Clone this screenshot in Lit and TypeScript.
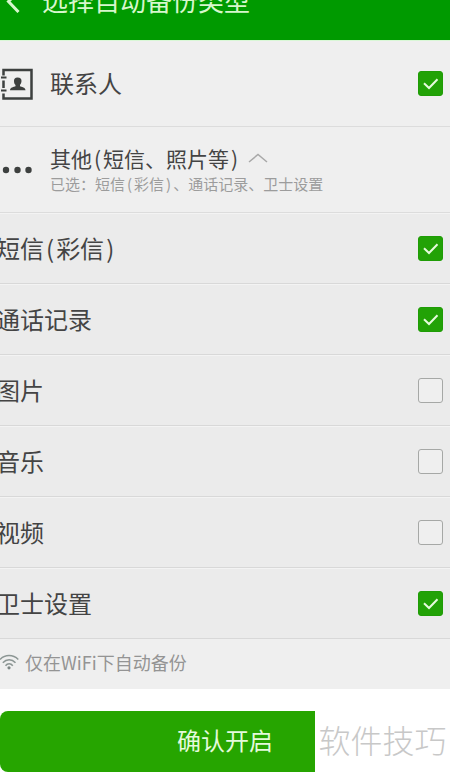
import { LitElement, html, css, svg } from "lit";
import { customElement, state } from "lit/decorators.js";

interface Item {
  id: string;
  label: string;
  checked: boolean;
}

@customElement("check-box")
class CheckBox extends LitElement {
  static properties = {
    checked: { type: Boolean },
    label: { type: String },
  };
  declare checked: boolean;
  declare label: string;

  static styles = css`
    :host {
      display: block;
      flex: none;
    }
    .box {
      display: grid;
      width: 25px;
      height: 25px;
    }
    .input {
      grid-area: 1 / 1;
      appearance: none;
      margin: 0;
      box-sizing: border-box;
      width: 25px;
      height: 25px;
      border: 1px solid #a6a8a6;
      border-radius: 3px;
      background: #efefef;
    }
    .input:checked {
      border-color: #1f9c06;
      background: #22a206;
    }
    .tick {
      grid-area: 1 / 1;
      width: 25px;
      height: 25px;
      pointer-events: none;
      fill: none;
      stroke: #e6fbdc;
      stroke-width: 2;
    }
  `;

  private toggle(e: Event) {
    this.checked = (e.target as HTMLInputElement).checked;
    this.dispatchEvent(new CustomEvent("toggled", { detail: this.checked }));
  }

  render() {
    return html`<label class="box">
      <input
        class="input"
        type="checkbox"
        aria-label=${this.label}
        .checked=${this.checked}
        @change=${this.toggle}
      />
      ${this.checked
        ? html`<svg class="tick" viewBox="0 0 25 25" aria-hidden="true">
            ${svg`<path d="M6 12.3L11 17L19.5 8.3" />`}
          </svg>`
        : ""}
    </label>`;
  }
}

/* Sets round brackets with a little air on both sides. */
const spaced = (text: string) =>
  text
    .split(/([()])/)
    .map((part) => (part === "(" || part === ")" ? html`<span class="paren">${part}</span>` : part));

@customElement("app-root")
class AppRoot extends LitElement {
  @state() private contacts = true;
  @state() private items: Item[] = [
    { id: "sms", label: "短信(彩信)", checked: true },
    { id: "calls", label: "通话记录", checked: true },
    { id: "pictures", label: "图片", checked: false },
    { id: "music", label: "音乐", checked: false },
    { id: "video", label: "视频", checked: false },
    { id: "guard", label: "卫士设置", checked: true },
  ];

  static styles = css`
    :host {
      display: block;
      overflow: hidden;
      background: #fff;
      color: #444;
      font-family: "Noto Sans CJK SC", sans-serif;
      font-size: 24px;
      font-weight: 400;
      line-height: 32px;
    }
    button {
      font: inherit;
      color: inherit;
      border: 0;
      padding: 0;
      background: none;
      text-align: left;
    }
    svg {
      display: block;
      flex: none;
      fill: none;
    }
    .header {
      display: flex;
      align-items: flex-end;
      gap: 20px;
      box-sizing: border-box;
      height: 41px;
      padding: 0 0 24px 6px;
      overflow: hidden;
      background: #009a00;
      border-bottom: 1px solid #d9f7d6;
      color: #d6f7cc;
    }
    .title {
      margin: 0;
      font-size: 26px;
      font-weight: 400;
      line-height: 32px;
    }
    .back {
      display: flex;
      align-items: center;
      height: 32px;
    }
    .row {
      display: flex;
      align-items: center;
      box-sizing: border-box;
      width: 100%;
      height: 86px;
      padding-right: 7px;
      border-bottom: 1px solid #dcdcdc;
      background: #efefef;
    }
    .icon {
      width: 34px;
      margin-right: 16px;
    }
    .label {
      flex: 1;
      padding-bottom: 1px;
    }
    .paren {
      margin: 0 2px;
    }
    .group-title {
      display: flex;
      align-items: center;
      gap: 8px;
      margin-bottom: 2px;
      font-size: 21px;
      line-height: 28px;
    }
    .summary {
      display: block;
      color: #9c9c9c;
      font-size: 15px;
      line-height: 20px;
    }
    .list {
      margin: 0;
      padding: 0;
      list-style: none;
    }
    .row.sub {
      height: 71px;
      background: #ebebeb;
      border-bottom-color: #d8d8d8;
      box-shadow: inset 0 1px #f3f3f3;
    }
    .sub .label {
      margin-left: -4px;
    }
    .note {
      display: flex;
      align-items: center;
      gap: 6px;
      box-sizing: border-box;
      height: 50px;
      margin: 0;
      padding-bottom: 4px;
      background: #efefef;
      color: #949494;
      font-size: 18px;
      line-height: 24px;
    }
    .footer {
      position: relative;
      padding: 22px 0 4px;
    }
    .confirm {
      display: block;
      width: 100%;
      height: 61px;
      padding-bottom: 3px;
      border-radius: 8px;
      background: #26a500;
      color: #e4fadb;
      text-align: center;
    }
    .mark {
      position: absolute;
      top: 16px;
      right: 0;
      bottom: 0;
      display: flex;
      align-items: center;
      justify-content: center;
      width: 30%;
      box-sizing: border-box;
      padding-bottom: 4px;
      background: #fff;
      color: #c8c8c8;
      font-size: 32px;
      font-weight: 300;
    }
  `;

  private setItem(id: string, checked: boolean) {
    this.items = this.items.map((i) => (i.id === id ? { ...i, checked } : i));
  }

  render() {
    const chosen = this.items.filter((i) => i.checked).map((i) => i.label);
    return html`
      <header class="header">
        <button class="back" aria-label="返回">
          <svg width="16" height="26" viewBox="0 0 16 26" stroke="#d6f7cc" stroke-width="3">
            <path d="M12 5L2.500 14.500L12.500 25" />
          </svg>
        </button>
        <h1 class="title">选择自动备份类型</h1>
      </header>
      <main>
        <div class="row">
          <svg class="icon" height="34" viewBox="0 0 34 34">
            <path d="M3.500 8.500V3H31.500V31.500H3.500V26.500M3.500 13.500V21" stroke="#3d403f" stroke-width="2.500" />
            <path d="M1 10.500H6.500M1 23.500H6.500" stroke="#3d403f" stroke-width="2" />
            <path
              d="M17.500 10.500C20.500 10.500 21.500 12 21.500 14C21.500 16 20.500 17 20 18V19.200C21.500 20.200 25.500 20 25.500 23.200H10C10 20 14 20.200 15.500 19.200V18C14.500 17 14 16 14 14C14 12 15 10.500 17.500 10.500Z"
              fill="#3d403f"
            />
          </svg>
          <span class="label">联系人</span>
          <check-box
            label="联系人"
            .checked=${this.contacts}
            @toggled=${(e: CustomEvent) => (this.contacts = e.detail)}
          ></check-box>
        </div>
        <button class="row" aria-expanded="true">
          <svg class="icon" height="8" viewBox="0 0 34 8">
            <circle cx="6" cy="4" r="3.200" fill="#3d403f" />
            <circle cx="17.500" cy="4" r="3.200" fill="#3d403f" />
            <circle cx="28.500" cy="4" r="3.200" fill="#3d403f" />
          </svg>
          <span class="label">
            <span class="group-title">
              <span>${spaced("其他(短信、照片等)")}</span>
              <svg width="20" height="10" viewBox="0 0 20 10" stroke="#a8a8a8" stroke-width="1.500">
                <path d="M1 9L10 1.500L19 9" />
              </svg>
            </span>
            <span class="summary">${spaced("已选：" + chosen.join("、"))}</span>
          </span>
        </button>
        <ul class="list">
          ${this.items.map(
            (i) => html`<li class="row sub">
              <span class="label">${spaced(i.label)}</span>
              <check-box
                .label=${i.label}
                .checked=${i.checked}
                @toggled=${(e: CustomEvent) => this.setItem(i.id, e.detail)}
              ></check-box>
            </li>`
          )}
        </ul>
        <p class="note">
          <svg width="19" height="16" viewBox="0 0 19 16" stroke="#8c9694" stroke-width="1.500">
            <path d="M0 5.500C5 .2 13 .2 18.300 5.500M2.800 8.800C6.500 4.800 11.800 4.800 15.500 8.800M5.500 11.800C7.500 9.200 10.800 9.200 12.800 11.800" />
            <circle cx="9" cy="13.800" r="1.600" fill="#7d8785" stroke="none" />
          </svg>
          仅在WiFi下自动备份
        </p>
      </main>
      <footer class="footer">
        <button class="confirm">确认开启</button>
        <span class="mark">软件技巧</span>
      </footer>
    `;
  }
}
